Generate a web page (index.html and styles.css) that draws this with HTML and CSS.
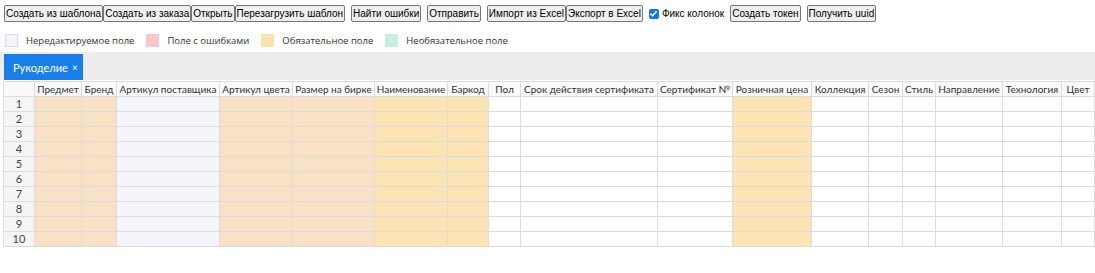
FILE: index.html
```html
<!DOCTYPE html>
<html lang="ru">
<head>
<meta charset="utf-8">
<link rel="stylesheet" href="styles.css">
</head>
<body>
<div class="toolbar">
  <div class="group"><button>Создать из шаблона</button><button>Создать из заказа</button><button>Открыть</button><button>Перезагрузить шаблон</button></div>
  <button>Найти ошибки</button>
  <button>Отправить</button>
  <div class="group"><button>Импорт из Excel</button><button>Экспорт в Excel</button></div>
  <label class="chk"><span class="box"><svg width="9" height="9" viewBox="0 0 9 9"><path d="M1.5 4.6 L3.6 6.7 L7.6 2.2" fill="none" stroke="#fff" stroke-width="1.6"/></svg></span>Фикс колонок</label>
  <button>Создать токен</button>
  <button>Получить uuid</button>
</div>
<div class="legend">
  <span class="item"><span class="sw sw-ro"></span>Нередактируемое поле</span>
  <span class="item"><span class="sw sw-err"></span>Поле с ошибками</span>
  <span class="item"><span class="sw sw-req"></span>Обязательное поле</span>
  <span class="item"><span class="sw sw-opt"></span>Необязательное поле</span>
</div>
<div class="tabbar"><div class="tab">Рукоделие <span class="x">×</span></div></div>
<table class="grid">
  <colgroup>
    <col style="width:31px"><col style="width:47px"><col style="width:35px"><col style="width:103px"><col style="width:73px"><col style="width:82px"><col style="width:73px"><col style="width:41px"><col style="width:32px"><col style="width:137px"><col style="width:75px"><col style="width:79px"><col style="width:57px"><col style="width:34px"><col style="width:33px"><col style="width:67px"><col style="width:59px"><col style="width:33px">
  </colgroup>
  <thead>
    <tr><th></th><th>Предмет</th><th>Бренд</th><th>Артикул поставщика</th><th>Артикул цвета</th><th>Размер на бирке</th><th>Наименование</th><th>Баркод</th><th>Пол</th><th>Срок действия сертификата</th><th>Сертификат №</th><th>Розничная цена</th><th>Коллекция</th><th>Сезон</th><th>Стиль</th><th>Направление</th><th>Технология</th><th>Цвет</th></tr>
  </thead>
  <tbody id="rows"></tbody>
</table>
<script>
var kinds=["rq2","rq2","ro","rq2","rq2","rq","rq","","","","rq","","","","","",""];
var b=document.getElementById("rows");
for(var i=1;i<=10;i++){var tr=document.createElement("tr");var th=document.createElement("th");th.textContent=i;tr.appendChild(th);
for(var j=0;j<kinds.length;j++){var td=document.createElement("td");if(kinds[j])td.className=kinds[j];tr.appendChild(td);}b.appendChild(tr);}
</script>
</body>
</html>
```
FILE: styles.css
```css
html,body{margin:0;padding:0;background:#fff;}
body{font-family:"Liberation Sans",Arial,sans-serif;color:#222;}
.toolbar{display:flex;align-items:center;gap:6px;padding:5px 4px 0 4px;height:17px;}
.group{display:flex;}
button{font-family:"Liberation Sans",Arial,sans-serif;font-size:10px;height:17px;padding:0 1px;margin:0;border:1px solid #767676;border-radius:2px;background:#efefef;color:#000;line-height:14px;white-space:nowrap;}
.chk{display:flex;align-items:center;gap:3px;font-size:10px;color:#000;}
.box{width:10px;height:10px;border-radius:2px;background:#1a73e8;display:flex;align-items:center;justify-content:center;}
.legend{display:flex;padding:10px 5px 0 5px;height:16px;font-family:"Open Sans","Noto Sans",sans-serif;font-size:9.5px;color:#333;align-items:center;}
.item{display:flex;align-items:center;gap:8px;margin-right:12px;}
.sw{width:13px;height:13px;display:inline-block;box-sizing:border-box;}
.sw-ro{background:#f3f5fb;border:1px solid #d8dbe6;}
.sw-err{background:#f8c8c8;}
.sw-req{background:#fce1b1;}
.sw-opt{background:#c6efe0;}
.tabbar{margin-top:4px;background:#ececec;height:28px;padding:2px 0 0 4px;box-sizing:border-box;}
.tab{display:inline-flex;align-items:center;gap:4px;background:#1a7ee8;color:#fff;height:26px;padding:0 5px 0 9px;font-family:Lato,sans-serif;font-size:11px;box-sizing:border-box;}
.x{font-size:10px;}
.grid{border-collapse:collapse;table-layout:fixed;margin:1px 0 0 3px;width:1091px;font-family:Lato,sans-serif;font-size:10px;color:#333;}
.grid th,.grid td{border:1px solid #dcdcdc;height:14px;padding:0 1px;white-space:nowrap;overflow:hidden;line-height:14px;}
.grid thead th{font-weight:normal;background:#fafafa;text-align:center;height:14px;}
.grid tbody th{font-weight:normal;background:#f5f5f5;text-align:center;color:#444;font-size:11px;}
.grid td{background:#fff;}
.grid td.rq2{background:#f8e1c4;}
.grid td.rq{background:#fde4b4;}
.grid td.ro{background:#f3f5fb;}
```
